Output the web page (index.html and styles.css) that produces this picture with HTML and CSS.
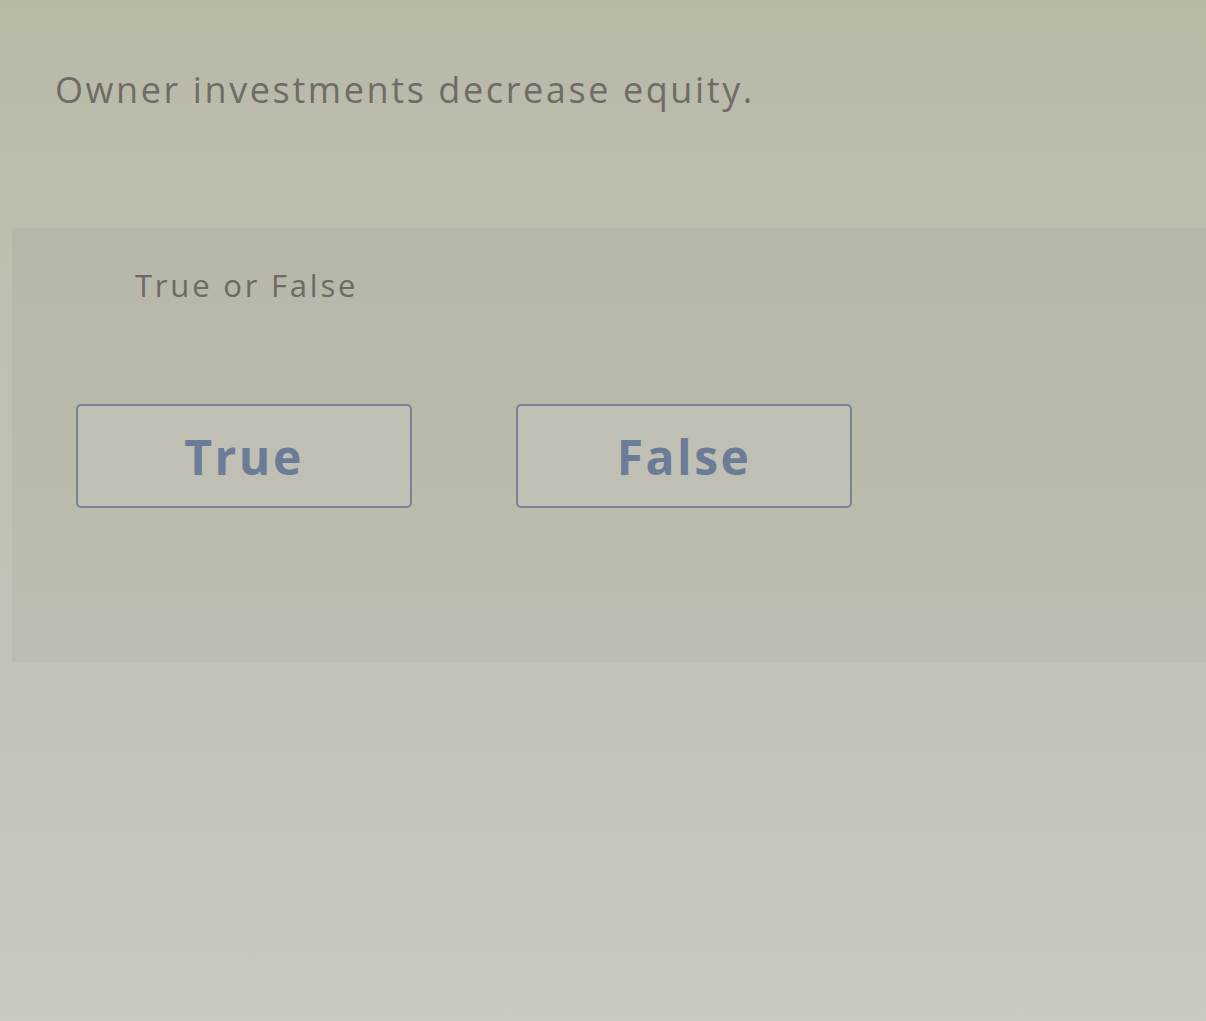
FILE: index.html
```html
<!DOCTYPE html>
<html lang="en">
<head>
    <meta charset="UTF-8">
    <meta name="viewport" content="width=device-width, initial-scale=1.0">
    <title>True or False</title>
    <link rel="stylesheet" href="styles.css">
</head>
<body>
    <header class="question">
        <p>Owner investments decrease equity.</p>
    </header>

    <section class="answer-panel">
        <div class="panel-head">
            <span class="hint">True or False</span>
        </div>
        <div class="choices">
            <button class="choice">True</button>
            <button class="choice">False</button>
        </div>
    </section>
</body>
</html>
```

FILE: styles.css
```css
body {
    font-family: "Open Sans", Lato, sans-serif;
    margin: 0;
    min-height: 1021px;
    background: linear-gradient(180deg, #b8b8a7 0px, #bdbeae 220px, #c3c4b8 700px, #c8c9bf 1021px);
}

.question {
    padding: 65px 0 0 55px;
    height: 163px;
}

.question p {
    margin: 0;
    font-size: 36px;
    letter-spacing: 2.6px;
    color: #6d6d65;
}

.answer-panel {
    margin-left: 12px;
    height: 434px;
    background: linear-gradient(180deg, #b6b7a8 0px, #b8b9aa 120px, #bcbdb0 434px);
}

.panel-head {
    padding: 36px 0 0 123px;
    height: 84px;
}

.hint {
    font-size: 31px;
    letter-spacing: 2.8px;
    color: #6b6b64;
}

.choices {
    display: flex;
    gap: 104px;
    padding: 56px 0 0 64px;
}

.choice {
    width: 336px;
    height: 104px;
    border: 2px solid #7b8390;
    border-radius: 5px;
    background: #bfc0b3;
    font-family: "Open Sans", Lato, sans-serif;
    font-size: 48px;
    font-weight: bold;
    letter-spacing: 2.5px;
    color: #6c7c98;
    cursor: pointer;
}

.choice:hover {
    background: #c5c6b9;
}
```
